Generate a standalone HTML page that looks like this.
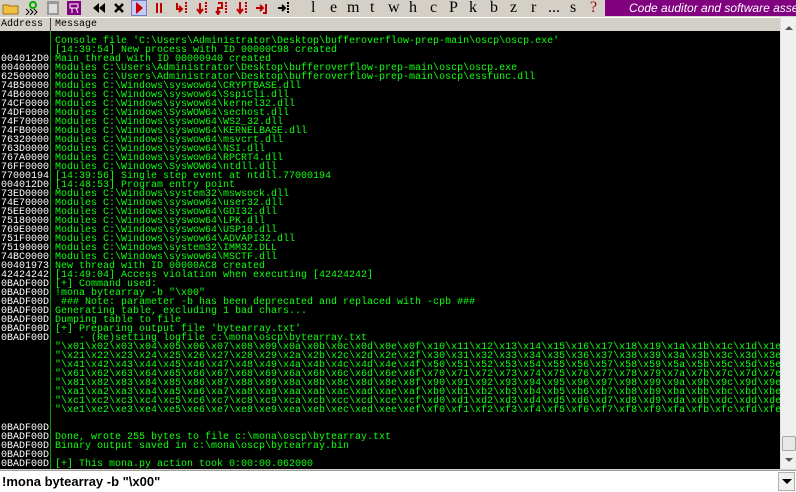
<!DOCTYPE html>
<html><head><meta charset="utf-8"><style>
*{margin:0;padding:0;box-sizing:border-box}
body{width:796px;height:492px;overflow:hidden;background:#d4d0c8;position:relative;font-family:"Liberation Mono",monospace}
#tb{position:absolute;left:0;top:0;width:796px;height:16px;background:#d4d0c8}
.ic{position:absolute;top:1px}
.lt{position:absolute;top:-1px;font:16px "Liberation Serif",serif;color:#000}
#banner{position:absolute;left:605px;top:0;width:191px;height:16px;background:#800080;color:#fff;font:italic 12px "Liberation Sans",sans-serif;white-space:nowrap;overflow:hidden;padding:1px 0 0 24px;line-height:14px}
#hdr{position:absolute;left:0;top:17px;width:780px;height:14px;background:#d4d0c8;border-top:1px solid #fff;font-size:10px;line-height:13px;color:#000}
#log{position:absolute;left:0;top:31px;width:780px;height:438px;background:#000;overflow:hidden}
.r{position:absolute;left:0;height:9px;width:780px;font-size:10px;line-height:9px;white-space:pre}
.a{position:absolute;left:1px;color:#fff}
.m{position:absolute;left:55px;color:#10ff10}
#sep{position:absolute;left:50px;top:0;width:1px;height:438px;background:#00a000}
#sb{position:absolute;left:780px;top:17px;width:16px;height:452px;background:#f0f0f0;border-left:1px solid #e0e0e0}
#inp{position:absolute;left:0;top:470px;width:796px;height:22px;background:#fff;border-top:1px solid #a0a0a0;font:bold 13px "Liberation Sans",sans-serif;padding:3px 0 0 2px;color:#000}
#dd{position:absolute;left:778px;top:472px;width:17px;height:19px;background:#f0f0f0;border:1px solid #b0b0b0}
</style></head><body>
<div id="tb">
<svg class="ic" style="left:2px" width="18" height="14"><path d="M1 4h5l1 1h9v8H1z" fill="#f0c040" stroke="#a07010"/></svg>
<svg class="ic" style="left:24px" width="16" height="14"><path d="M2 8l3 3-3 3M6 8l3 3-3 3M10 8l3 3-3 3" stroke="#000" fill="none"/><circle cx="9" cy="4" r="3" fill="none" stroke="#0a0" stroke-width="2"/></svg>
<svg class="ic" style="left:46px" width="14" height="14"><rect x="1" y="0" width="12" height="14" fill="#999"/><rect x="3" y="3" width="8" height="9" fill="#ddd"/></svg>
<svg class="ic" style="left:67px" width="14" height="14"><rect x="0" y="0" width="14" height="14" fill="#800080"/><path d="M3 3h8v4H3zM5 7v5M9 7l2 5" stroke="#fff" fill="none"/></svg>
<svg class="ic" style="left:92px" width="14" height="14"><path d="M7 2L1 7l6 5zM13 2L7 7l6 5z" fill="#000"/></svg>
<svg class="ic" style="left:113px" width="12" height="14"><path d="M2 3l8 8M10 3l-8 8" stroke="#000" stroke-width="2.5"/></svg>
<div style="position:absolute;left:131px;top:0;width:16px;height:16px;background:#c8c8f0;border:1px solid #7080c0"></div>
<svg class="ic" style="left:134px" width="10" height="14"><path d="M2 1l7 6-7 6z" fill="#c00000"/></svg>
<svg class="ic" style="left:155px" width="8" height="14"><path d="M2 2v10M6 2v10" stroke="#c00000" stroke-width="2"/></svg>
<svg class="ic" style="left:175px" width="14" height="14"><path d="M2 2v6h4M4 5l3 3-3 3" stroke="#c00000" stroke-width="2" fill="none"/><path d="M11 1v12" stroke="#c00000" stroke-width="2" stroke-dasharray="2 1"/></svg>
<svg class="ic" style="left:195px" width="14" height="14"><path d="M5 2v9M2 8l3 4 3-4" stroke="#c00000" stroke-width="2" fill="none"/><path d="M11 1v12" stroke="#c00000" stroke-width="2" stroke-dasharray="2 1"/></svg>
<svg class="ic" style="left:215px" width="14" height="14"><path d="M3 2h4v5H3v6M1 10l2 3 2-3" stroke="#c00000" stroke-width="2" fill="none"/><path d="M11 1v12" stroke="#c00000" stroke-width="2" stroke-dasharray="2 1"/></svg>
<svg class="ic" style="left:235px" width="14" height="14"><path d="M5 1v10M2 8l3 4 3-4" stroke="#c00000" stroke-width="2" fill="none"/><path d="M11 1v12" stroke="#c00000" stroke-width="2" stroke-dasharray="2 1"/></svg>
<svg class="ic" style="left:255px" width="14" height="14"><path d="M1 7h6M5 4l3 3-3 3M11 3v9H8" stroke="#c00000" stroke-width="2" fill="none"/></svg>
<svg class="ic" style="left:277px" width="14" height="14"><path d="M1 7h6M5 4l3 3-3 3" stroke="#000" stroke-width="2" fill="none"/><path d="M11 1v12" stroke="#000" stroke-width="2" stroke-dasharray="2 1"/></svg>
<span class="lt" style="left:311px">l</span><span class="lt" style="left:330px">e</span><span class="lt" style="left:347px">m</span><span class="lt" style="left:370px">t</span><span class="lt" style="left:388px">w</span><span class="lt" style="left:409px">h</span><span class="lt" style="left:430px">c</span><span class="lt" style="left:449px">P</span><span class="lt" style="left:469px">k</span><span class="lt" style="left:490px">b</span><span class="lt" style="left:510px">z</span><span class="lt" style="left:531px">r</span><span class="lt" style="left:548px">...</span><span class="lt" style="left:570px">s</span><span class="lt" style="left:590px;color:#a00000">?</span>
<div id="banner">Code auditor and software assessment specialist</div>
</div>
<div id="hdr"><span style="position:absolute;left:1px">Address</span><div style="position:absolute;left:50px;top:0;width:1px;height:14px;background:#404040"></div><span style="position:absolute;left:55px">Message</span></div>
<div id="log"><div id="sep"></div>
<div class="r" style="top:6px"><span class="m">Console file 'C:\Users\Administrator\Desktop\bufferoverflow-prep-main\oscp\oscp.exe'</span></div>
<div class="r" style="top:15px"><span class="m">[14:39:54] New process with ID 00000C98 created</span></div>
<div class="r" style="top:24px"><span class="a">004012D0</span><span class="m">Main thread with ID 00000940 created</span></div>
<div class="r" style="top:33px"><span class="a">00400000</span><span class="m">Modules C:\Users\Administrator\Desktop\bufferoverflow-prep-main\oscp\oscp.exe</span></div>
<div class="r" style="top:42px"><span class="a">62500000</span><span class="m">Modules C:\Users\Administrator\Desktop\bufferoverflow-prep-main\oscp\essfunc.dll</span></div>
<div class="r" style="top:51px"><span class="a">74B50000</span><span class="m">Modules C:\Windows\syswow64\CRYPTBASE.dll</span></div>
<div class="r" style="top:60px"><span class="a">74B60000</span><span class="m">Modules C:\Windows\syswow64\SspiCli.dll</span></div>
<div class="r" style="top:69px"><span class="a">74CF0000</span><span class="m">Modules C:\Windows\syswow64\kernel32.dll</span></div>
<div class="r" style="top:78px"><span class="a">74DF0000</span><span class="m">Modules C:\Windows\SysWOW64\sechost.dll</span></div>
<div class="r" style="top:87px"><span class="a">74F70000</span><span class="m">Modules C:\Windows\syswow64\WS2_32.dll</span></div>
<div class="r" style="top:96px"><span class="a">74FB0000</span><span class="m">Modules C:\Windows\syswow64\KERNELBASE.dll</span></div>
<div class="r" style="top:105px"><span class="a">76320000</span><span class="m">Modules C:\Windows\syswow64\msvcrt.dll</span></div>
<div class="r" style="top:114px"><span class="a">763D0000</span><span class="m">Modules C:\Windows\syswow64\NSI.dll</span></div>
<div class="r" style="top:123px"><span class="a">767A0000</span><span class="m">Modules C:\Windows\syswow64\RPCRT4.dll</span></div>
<div class="r" style="top:132px"><span class="a">76FF0000</span><span class="m">Modules C:\Windows\SysWOW64\ntdll.dll</span></div>
<div class="r" style="top:141px"><span class="a">77000194</span><span class="m">[14:39:56] Single step event at ntdll.77000194</span></div>
<div class="r" style="top:150px"><span class="a">004012D0</span><span class="m">[14:48:53] Program entry point</span></div>
<div class="r" style="top:159px"><span class="a">73ED0000</span><span class="m">Modules C:\Windows\system32\mswsock.dll</span></div>
<div class="r" style="top:168px"><span class="a">74E70000</span><span class="m">Modules C:\Windows\syswow64\user32.dll</span></div>
<div class="r" style="top:177px"><span class="a">75EE0000</span><span class="m">Modules C:\Windows\syswow64\GDI32.dll</span></div>
<div class="r" style="top:186px"><span class="a">75180000</span><span class="m">Modules C:\Windows\syswow64\LPK.dll</span></div>
<div class="r" style="top:195px"><span class="a">769E0000</span><span class="m">Modules C:\Windows\syswow64\USP10.dll</span></div>
<div class="r" style="top:204px"><span class="a">751F0000</span><span class="m">Modules C:\Windows\syswow64\ADVAPI32.dll</span></div>
<div class="r" style="top:213px"><span class="a">75190000</span><span class="m">Modules C:\Windows\system32\IMM32.DLL</span></div>
<div class="r" style="top:222px"><span class="a">74BC0000</span><span class="m">Modules C:\Windows\syswow64\MSCTF.dll</span></div>
<div class="r" style="top:231px"><span class="a">00401973</span><span class="m">New thread with ID 00000AC8 created</span></div>
<div class="r" style="top:240px"><span class="a">42424242</span><span class="m">[14:49:04] Access violation when executing [42424242]</span></div>
<div class="r" style="top:249px"><span class="a">0BADF00D</span><span class="m">[+] Command used:</span></div>
<div class="r" style="top:258px"><span class="a">0BADF00D</span><span class="m">!mona bytearray -b "\x00"</span></div>
<div class="r" style="top:267px"><span class="a">0BADF00D</span><span class="m"> ### Note: parameter -b has been deprecated and replaced with -cpb ###</span></div>
<div class="r" style="top:276px"><span class="a">0BADF00D</span><span class="m">Generating table, excluding 1 bad chars...</span></div>
<div class="r" style="top:285px"><span class="a">0BADF00D</span><span class="m">Dumping table to file</span></div>
<div class="r" style="top:294px"><span class="a">0BADF00D</span><span class="m">[+] Preparing output file 'bytearray.txt'</span></div>
<div class="r" style="top:303px"><span class="a">0BADF00D</span><span class="m">    - (Re)setting logfile c:\mona\oscp\bytearray.txt</span></div>
<div class="r" style="top:312px"><span class="m">"\x01\x02\x03\x04\x05\x06\x07\x08\x09\x0a\x0b\x0c\x0d\x0e\x0f\x10\x11\x12\x13\x14\x15\x16\x17\x18\x19\x1a\x1b\x1c\x1d\x1e\x1f\x20"</span></div>
<div class="r" style="top:321px"><span class="m">"\x21\x22\x23\x24\x25\x26\x27\x28\x29\x2a\x2b\x2c\x2d\x2e\x2f\x30\x31\x32\x33\x34\x35\x36\x37\x38\x39\x3a\x3b\x3c\x3d\x3e\x3f\x40"</span></div>
<div class="r" style="top:330px"><span class="m">"\x41\x42\x43\x44\x45\x46\x47\x48\x49\x4a\x4b\x4c\x4d\x4e\x4f\x50\x51\x52\x53\x54\x55\x56\x57\x58\x59\x5a\x5b\x5c\x5d\x5e\x5f\x60"</span></div>
<div class="r" style="top:339px"><span class="m">"\x61\x62\x63\x64\x65\x66\x67\x68\x69\x6a\x6b\x6c\x6d\x6e\x6f\x70\x71\x72\x73\x74\x75\x76\x77\x78\x79\x7a\x7b\x7c\x7d\x7e\x7f\x80"</span></div>
<div class="r" style="top:348px"><span class="m">"\x81\x82\x83\x84\x85\x86\x87\x88\x89\x8a\x8b\x8c\x8d\x8e\x8f\x90\x91\x92\x93\x94\x95\x96\x97\x98\x99\x9a\x9b\x9c\x9d\x9e\x9f\xa0"</span></div>
<div class="r" style="top:357px"><span class="m">"\xa1\xa2\xa3\xa4\xa5\xa6\xa7\xa8\xa9\xaa\xab\xac\xad\xae\xaf\xb0\xb1\xb2\xb3\xb4\xb5\xb6\xb7\xb8\xb9\xba\xbb\xbc\xbd\xbe\xbf\xc0"</span></div>
<div class="r" style="top:366px"><span class="m">"\xc1\xc2\xc3\xc4\xc5\xc6\xc7\xc8\xc9\xca\xcb\xcc\xcd\xce\xcf\xd0\xd1\xd2\xd3\xd4\xd5\xd6\xd7\xd8\xd9\xda\xdb\xdc\xdd\xde\xdf\xe0"</span></div>
<div class="r" style="top:375px"><span class="m">"\xe1\xe2\xe3\xe4\xe5\xe6\xe7\xe8\xe9\xea\xeb\xec\xed\xee\xef\xf0\xf1\xf2\xf3\xf4\xf5\xf6\xf7\xf8\xf9\xfa\xfb\xfc\xfd\xfe\xff"</span></div>
<div class="r" style="top:393px"><span class="a">0BADF00D</span></div>
<div class="r" style="top:402px"><span class="a">0BADF00D</span><span class="m">Done, wrote 255 bytes to file c:\mona\oscp\bytearray.txt</span></div>
<div class="r" style="top:411px"><span class="a">0BADF00D</span><span class="m">Binary output saved in c:\mona\oscp\bytearray.bin</span></div>
<div class="r" style="top:420px"><span class="a">0BADF00D</span></div>
<div class="r" style="top:429px"><span class="a">0BADF00D</span><span class="m">[+] This mona.py action took 0:00:00.062000</span></div>
</div>
<div id="sb">
<svg style="position:absolute;left:4px;top:9px" width="8" height="5"><path d="M0 4L4 0 8 4z" fill="#555"/></svg>
<div style="position:absolute;left:1px;top:419px;width:14px;height:15px;background:#e8e8e8;border:1px solid #a8a8a8;border-radius:2px"></div>
<svg style="position:absolute;left:4px;top:441px" width="8" height="5"><path d="M0 0L4 4 8 0z" fill="#555"/></svg>
</div>
<div id="inp">!mona bytearray -b "\x00"</div>
<div id="dd"><svg style="position:absolute;left:3px;top:6px" width="10" height="6"><path d="M0 0h10L5 5z" fill="#000"/></svg></div>
</body></html>
